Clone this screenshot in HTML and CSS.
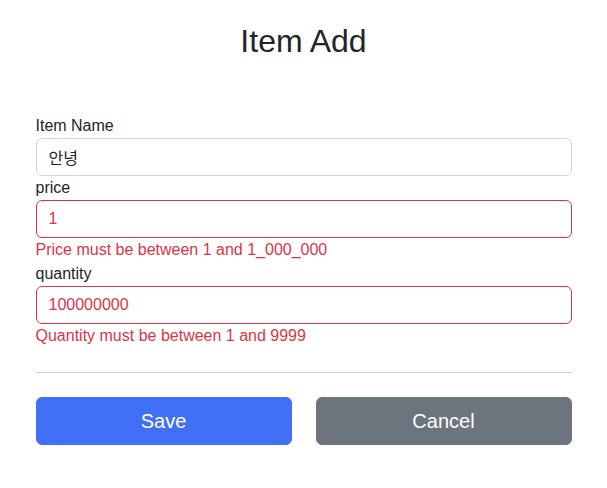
FILE: index.html
```html
<!DOCTYPE html>
<html lang="ko">
<head>
<meta charset="utf-8">
<title>Item Add</title>
<link rel="stylesheet" href="styles.css">
</head>
<body>
<div class="container">
  <div class="header">
    <h2 class="title">Item Add</h2>
  </div>
  <form class="form">
    <div class="field">
      <label class="label" for="itemName">Item Name</label>
      <input class="control" id="itemName" type="text" value="안녕">
    </div>
    <div class="field">
      <label class="label" for="price">price</label>
      <input class="control invalid" id="price" type="text" value="1">
      <div class="error">Price must be between 1 and 1_000_000</div>
    </div>
    <div class="field">
      <label class="label" for="quantity">quantity</label>
      <input class="control invalid" id="quantity" type="text" value="100000000">
      <div class="error">Quantity must be between 1 and 9999</div>
    </div>
    <hr class="divider">
    <div class="actions">
      <button class="btn btn-primary" type="button">Save</button>
      <button class="btn btn-secondary" type="button">Cancel</button>
    </div>
  </form>
</div>
</body>
</html>
```
FILE: styles.css
```css
* { box-sizing: border-box; }
body {
  margin: 0;
  font-family: "Liberation Sans", Arial, "Noto Sans CJK KR", sans-serif;
  font-size: 16px;
  line-height: 1.5;
  color: #212529;
  background: #fff;
}
.container {
  max-width: 560px;
  margin: 0 auto;
  padding: 0 12px;
}
.header {
  text-align: center;
  padding-top: 22px;
  padding-bottom: 54px;
}
.title {
  margin: 0;
  font-size: 32px;
  font-weight: 500;
  line-height: 1.2;
}
.form { margin: 0; }
.label {
  display: block;
  line-height: 24px;
}
.control {
  display: block;
  width: 100%;
  height: 38px;
  padding: 6px 12px;
  font-family: inherit;
  font-size: 16px;
  line-height: 24px;
  color: #212529;
  background: #fff;
  border: 1px solid #ced4da;
  border-radius: 6px;
  outline: none;
}
.control.invalid {
  border-color: #dc3545;
  color: #dc3545;
}
.error {
  color: #dc3545;
  line-height: 24px;
}
.divider {
  margin: 24px 0;
  border: 0;
  border-top: 1px solid #cfcfcf;
}
.actions {
  display: grid;
  grid-template-columns: 1fr 1fr;
  column-gap: 24px;
}
.btn {
  height: 48px;
  padding: 8px 16px;
  font-family: inherit;
  font-size: 20px;
  line-height: 30px;
  color: #fff;
  border: 1px solid transparent;
  border-radius: 6px;
  cursor: pointer;
}
.btn-primary { background: #416ff5; border-color: #416ff5; }
.btn-secondary { background: #6c757d; border-color: #6c757d; }
```
